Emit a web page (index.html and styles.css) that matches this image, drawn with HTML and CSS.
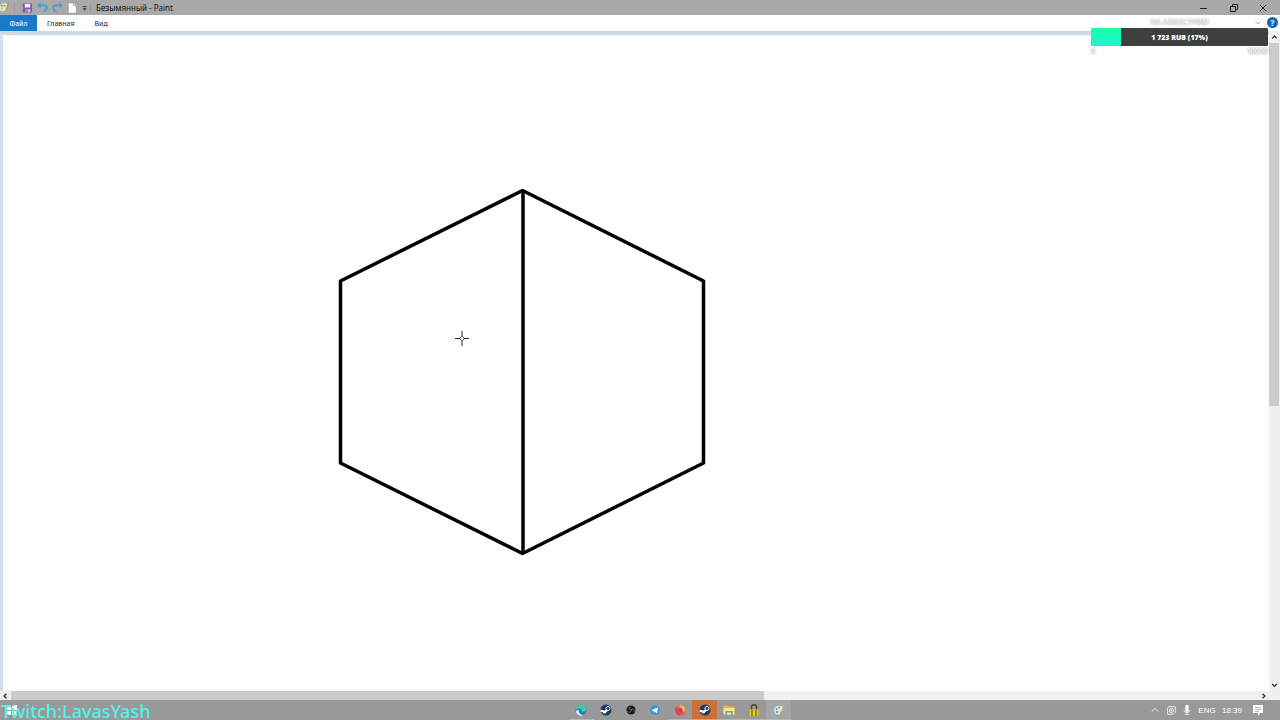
FILE: index.html
```
<!DOCTYPE html>
<html lang="ru">
<head>
  <meta charset="UTF-8">
  <title>Безымянный - Paint</title>
  <link rel="stylesheet" href="styles.css">
</head>
<body>

  <header class="titlebar">
    <div class="quick-access">
      <svg class="app-icon" viewBox="0 0 12 12"><path d="M0 4C3 0 9 1 9 5c0 2-3 1-3 3S2 11 0 9z" fill="#d9e5d4"/><circle cx="2" cy="4" r="1" fill="#3a9bd8"/><circle cx="5" cy="4" r="1" fill="#62b34b"/><circle cx="2" cy="7" r="1" fill="#e3b52d"/><path d="M9 1L7 10" stroke="#e08a2c" stroke-width="1.5"/></svg>
      <span class="divider"></span>
      <button class="tool" aria-label="Сохранить"><svg viewBox="0 0 12 12"><path d="M1 1.500h10v10H1z" fill="#7c5cae"/><path d="M3 2h6v4H3z" fill="#eee8f7"/><path d="M4 8h5v3H4z" fill="#d5c7ec"/><path d="M5 8.500h1V11H5z" fill="#5d3e91"/></svg></button>
      <button class="tool" aria-label="Отменить"><svg viewBox="0 0 12 12"><path d="M1 3.500h6c5 0 5 5 0 7" fill="none" stroke="#4b9fcb" stroke-width="2"/><path d="M4 0L0 3.500 4 7z" fill="#4b9fcb"/></svg></button>
      <button class="tool" aria-label="Вернуть"><svg viewBox="0 0 12 12"><path d="M11 3.500H5c-5 0-5 5 0 7" fill="none" stroke="#4b9fcb" stroke-width="2"/><path d="M8 0l4 3.500L8 7z" fill="#4b9fcb"/></svg></button>
      <button class="tool" aria-label="Создать"><svg viewBox="0 0 12 12"><path d="M1.500 1H7l3 3v8H1.500z" fill="#fff" stroke="#858585" stroke-width=".5"/><path d="M7 1v3h3" fill="#ddd" stroke="#777" stroke-width=".5"/></svg></button>
      <button class="tool more" aria-label="Настройка панели"><svg viewBox="0 0 12 12"><path d="M3 5h5" stroke="#333"/><path d="M3 7h5L5.500 9.500z" fill="#333"/></svg></button>
      <span class="divider"></span>
    </div>
    <h1>Безымянный - Paint</h1>
    <div class="window-buttons">
      <button aria-label="Свернуть"><svg viewBox="0 0 12 12"><path d="M2 6.500h7" stroke="#222"/></svg></button>
      <button aria-label="Развернуть"><svg viewBox="0 0 12 12"><path d="M2.500 4.500h5v5h-5zM4.500 4.500v-2h5v5h-2" fill="none" stroke="#222"/></svg></button>
      <button aria-label="Закрыть"><svg viewBox="0 0 12 12"><path d="M2 3l6 6M8 3L2 9" stroke="#222"/></svg></button>
    </div>
  </header>

  <nav class="ribbon">
    <button class="tab file">Файл</button>
    <button class="tab">Главная</button>
    <button class="tab">Вид</button>
    <button class="expand" aria-label="Развернуть ленту"><svg viewBox="0 0 12 12"><path d="M3.500 4.500L6 7l2.500-2.500" fill="none" stroke="#aaa"/></svg></button>
    <button class="help" aria-label="Справка">?</button>
  </nav>

  <main class="workspace">
    <div class="sheet">
      <svg class="drawing" viewBox="0 0 1266 656">
        <g fill="none" stroke="#000" stroke-width="3.500" stroke-linejoin="round">
          <path d="M519.500 155.500L700.500 246v182L519.500 518.500 337.500 428V246z"/>
          <path d="M520 155.500V518.500"/>
        </g>
        <!-- crosshair cursor -->
        <g fill="none" stroke="#222">
          <path d="M452 303.500h5M461 303.500h5M459 296v5M459 306v5"/>
          <circle cx="459" cy="303.500" r="2" stroke-width=".7"/>
        </g>
      </svg>
    </div>
    <div class="scroll vertical">
      <button aria-label="Вверх"><svg viewBox="0 0 12 12"><path d="M3.500 7.500L6 5l2.500 2.500" fill="none" stroke="#333" stroke-width="1.500"/></svg></button>
      <div class="track"><div class="thumb"></div></div>
      <button aria-label="Вниз"><svg viewBox="0 0 12 12"><path d="M3.500 5L6 7.500 8.500 5" fill="none" stroke="#333" stroke-width="1.500"/></svg></button>
    </div>
    <div class="scroll horizontal">
      <button aria-label="Влево"><svg viewBox="0 0 12 12"><path d="M7 3.500L4.500 6 7 8.500" fill="none" stroke="#333" stroke-width="1.500"/></svg></button>
      <div class="track"><div class="thumb"></div></div>
      <button aria-label="Вправо"><svg viewBox="0 0 12 12"><path d="M5 3.500L7.500 6 5 8.500" fill="none" stroke="#333" stroke-width="1.500"/></svg></button>
    </div>
  </main>

  <footer class="taskbar">
    <button class="start" aria-label="Пуск"><svg viewBox="0 0 12 12"><path d="M1 2.500L5 2v4H1zM6 2l5-1v5H6zM1 7h4v4l-4-.5zM6 7h5v5l-5-1z" fill="#fff"/></svg></button>
    <div class="apps">
      <button class="open" aria-label="Edge"><svg viewBox="0 0 12 12"><circle cx="6" cy="6" r="5.500" fill="#2381c4"/><path d="M.5 6C1-1 11-1 11.500 5c0 3-4 3-5 2 1-2-1-4-6-1z" fill="#4ac99b"/><path d="M4 6c-1 3 2 5 5 5-3 2-8 0-8-4 1-1 2-1 3-1z" fill="#d9f0f5"/></svg></button>
      <button aria-label="Steam"><svg viewBox="0 0 12 12"><circle cx="6" cy="6" r="5.500" fill="#193a64"/><path d="M.6 6.500L5 8l3-3" fill="none" stroke="#fff" stroke-width="2"/><circle cx="8" cy="4.500" r="2" fill="#193a64" stroke="#fff"/><circle cx="4.500" cy="8" r="1.500" fill="#fff"/></svg></button>
      <button aria-label="OBS"><svg viewBox="0 0 12 12"><circle cx="6" cy="6" r="4.500" fill="#171717"/><path d="M6 6C3 5 4 3 6 3M6 6c2-2 4 0 3 2M6 6c0 3-2 3-4 1" fill="none" stroke="#858585" stroke-width=".8"/></svg></button>
      <button aria-label="Telegram"><svg viewBox="0 0 12 12"><circle cx="6" cy="6" r="4.700" fill="#2a9cd7"/><path d="M2.500 6L9 3.500 8 9 5.800 7.500 5 9 4.500 7z" fill="#fff"/></svg></button>
      <button class="open" aria-label="Firefox"><svg viewBox="0 0 12 12"><path d="M1 3l2-1 1 1 3-3c0 2 4 2 4.500 6S9 12 6 11.800 0 9 1 3z" fill="#f46332"/><path d="M7 0c0 2 4 2 4.500 6L9 9 8 4 5 3z" fill="#ffbd32"/><circle cx="6" cy="6.500" r="2.500" fill="#8050bf"/><path d="M1 5c2-1 4 0 5 1L4 7c1 2 4 2 6 0-1 5-9 6-9-2z" fill="#ef3c58"/></svg></button>
      <button class="active" aria-label="Steam, активное окно"><svg viewBox="0 0 12 12"><circle cx="6" cy="6" r="5.500" fill="#193a64"/><path d="M.6 6.500L5 8l3-3" fill="none" stroke="#fff" stroke-width="2"/><circle cx="8" cy="4.500" r="2" fill="#193a64" stroke="#fff"/><circle cx="4.500" cy="8" r="1.500" fill="#fff"/></svg></button>
      <button class="open" aria-label="Проводник"><svg viewBox="0 0 12 12"><path d="M.5 1.500H5l1 1h5.500v8H.5z" fill="#e5b943"/><path d="M.5 4h11v6.500H.5z" fill="#ffe18a"/><path d="M2.500 11V7h7v4H8V8.500H4V11z" fill="#48a9d9"/></svg></button>
      <button class="open" aria-label="Замок"><svg viewBox="0 0 12 12"><path d="M3.500 6V3c0-3 5-3 5 0v3" fill="none" stroke="#4b4924" stroke-width="1.500"/><path d="M1.500 5.500h9V12h-9z" fill="#e0cf27"/><path d="M4 6v6M8 6v6" stroke="#504b15"/></svg></button>
      <button class="open current" aria-label="Paint"><svg viewBox="0 0 12 12"><path d="M1 6c0-5 9-6 9-1 0 3-3 1-3 4s-6 2-6-3z" fill="#d5e9e9"/><circle cx="3.500" cy="5" r="1" fill="#3da5d4"/><circle cx="6" cy="3.500" r="1" fill="#67b64e"/><circle cx="4" cy="8" r="1" fill="#7968aa"/><path d="M11 1L8 9" stroke="#dcad51" stroke-width="1.300"/></svg></button>
    </div>
    <div class="tray">
      <button aria-label="Скрытые значки"><svg viewBox="0 0 12 12"><path d="M2 8l4-4 4 4" fill="none" stroke="#fff"/></svg></button>
      <button aria-label="Запись"><svg viewBox="0 0 12 12"><path d="M3 2h8v7L9 11H2V4z" fill="none" stroke="#fff"/><circle cx="6.500" cy="6.500" r="2.500" fill="none" stroke="#fff"/><circle cx="6.500" cy="6.500" r="1" fill="#fff"/></svg></button>
      <button aria-label="Микрофон"><svg viewBox="0 0 12 12"><rect x="4" y="0" width="4" height="8" rx="1" fill="#fff"/><path d="M2.500 6c0 4 7 4 7 0M6 9v2M4 11.500h4" fill="none" stroke="#fff"/></svg></button>
      <button class="lang">ENG</button>
      <time>18:39</time>
      <button class="notices" aria-label="Уведомления"><svg viewBox="0 0 12 12"><path d="M1 1h10v8H8l-2 3V9H1z" fill="#fff"/><path d="M3 3.500h6M3 5.500h6M3 7.500h4" stroke="#999" stroke-width=".7"/></svg></button>
    </div>
  </footer>

  <!-- stream overlays -->
  <section class="goal">
    <div class="goal-title">НА АЛКОСТРИМ</div>
    <div class="goal-bar"><span>1 723 RUB (17%)</span></div>
    <div class="goal-range"><span>0</span><span>10000</span></div>
  </section>
  <div class="channel">Twitch:LavasYash</div>

</body>
</html>
```
FILE: styles.css
```
* {
  margin: 0;
  padding: 0;
  box-sizing: border-box;
}

body {
  font-family: "Noto Sans", sans-serif;
  font-size: 7px;
  color: #222;
  height: 100vh;
  display: flex;
  flex-direction: column;
  overflow: hidden;
}

button {
  font: inherit;
  color: inherit;
  background: none;
  border: none;
  display: flex;
  align-items: center;
  justify-content: center;
}

svg {
  display: block;
  width: 12px;
  height: 12px;
}

.titlebar {
  height: 15px;
  background: #a9a9a9;
  display: flex;
  align-items: center;
}

.quick-access {
  display: flex;
  align-items: center;
  width: 96px;
}

.quick-access svg {
  width: 11px;
  height: 11px;
}

.divider {
  width: 1px;
  height: 9px;
  margin: 0 5px 0 3px;
  background: #999;
}

.tool {
  width: 15px;
}

.tool.more {
  width: 10px;
}

.tool.more + .divider {
  margin: 0;
}

h1 {
  font-size: 8px;
  font-weight: normal;
  line-height: 15px;
  color: #111;
}

.window-buttons {
  display: flex;
  margin-left: auto;
}

.window-buttons button {
  width: 30px;
  padding-right: 2px;
}

.ribbon {
  height: 16px;
  background: #fff;
  display: flex;
  padding-right: 2px;
}

.tab {
  padding: 0 10px;
}

.tab.file {
  width: 37px;
  background: #1979ca;
  color: #fff;
}

.expand {
  margin-left: auto;
  width: 12px;
}

.help {
  width: 11px;
  height: 11px;
  margin: 2px 0 0 3px;
  border-radius: 50%;
  background: #1267b6;
  color: #fff;
  font-size: 8px;
  font-weight: bold;
}

.workspace {
  flex: 1;
  min-height: 0;
  display: grid;
  grid-template-columns: 1fr 11px;
  grid-template-rows: 1fr 9px;
}

.sheet {
  overflow: hidden;
  background: #fefefe;
  border-top: 4px solid #cfd9e4;
  border-left: 3px solid #d3dfec;
}

.drawing {
  width: 100%;
  height: 100%;
}

.scroll {
  display: flex;
  background: #f0f0f0;
}

.scroll button {
  flex: none;
  width: 11px;
  height: 9px;
}

.track {
  flex: 1;
}

.thumb {
  background: #cbcbcb;
}

.vertical {
  flex-direction: column;
}

.vertical button {
  height: 12px;
}

.vertical .thumb {
  width: 10px;
  height: 57%;
}

.horizontal {
  grid-column: 1 / -1;
  padding-right: 11px;
}

.horizontal .thumb {
  width: 60.4%;
  height: 100%;
}

.taskbar {
  height: 20px;
  background: #999;
  display: grid;
  grid-template-columns: 569px 222px 1fr;
}

.start {
  width: 24px;
}

.apps {
  display: grid;
  grid-template-columns: repeat(9, 1fr);
}

.apps button {
  border-bottom: 1px solid transparent;
}

.apps .open {
  border-color: #b5b5b5;
}

.apps .active {
  background: #cb7137;
  border-color: #ed9b65;
}

.apps .current {
  background: #a5a5a5;
}

.tray {
  display: flex;
  align-items: center;
  justify-content: flex-end;
  color: #fff;
  font-family: "Liberation Sans", sans-serif;
  font-size: 8px;
  padding-right: 14px;
}

.tray button {
  width: 16px;
}

.tray svg {
  width: 10px;
  height: 10px;
}

.tray .lang {
  width: 24px;
}

.tray time {
  width: 26px;
  text-align: center;
}

.tray .notices {
  width: 16px;
  margin-left: 5px;
}

.tray .notices svg {
  width: 12px;
  height: 12px;
}

.goal {
  position: absolute;
  top: 18px;
  right: 12px;
  width: 177px;
  color: #fff;
  font-family: Inter, sans-serif;
  font-size: 7px;
  text-shadow: 0 0 2px #555;
}

.goal-title {
  line-height: 10px;
  text-align: center;
}

.goal-bar {
  height: 18px;
  line-height: 19px;
  text-align: center;
  font-family: "Open Sans", sans-serif;
  font-weight: 800;
  border-radius: 1px;
  background: linear-gradient(#1bffa0, #19f5d7) 0 0 / 17% 100% no-repeat #3f3f3f;
}

.goal-range {
  display: flex;
  justify-content: space-between;
  line-height: 11px;
}

.channel {
  position: absolute;
  left: 1px;
  bottom: 0;
  color: #4ff5e8;
  font-size: 18px;
  font-weight: 500;
  line-height: 18px;
}
```
